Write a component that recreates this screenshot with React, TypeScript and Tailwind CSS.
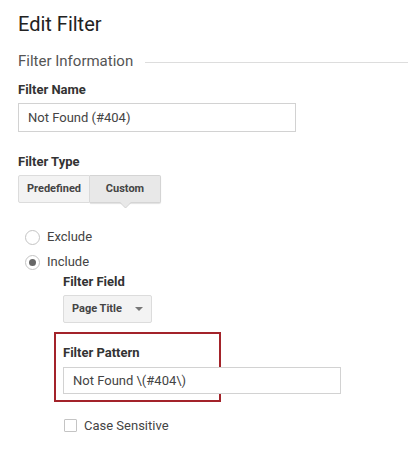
const font = { fontFamily: 'Roboto, "Liberation Sans", sans-serif' };

const Radio = ({ label, checked }: { label: string; checked?: boolean }) => (
    <div className="flex items-center h-[20px]">
        <span className="ml-[25px] w-[15px] h-[15px] rounded-full border border-[#c4c4c4] bg-white flex items-center justify-center">
            {checked && <span className="w-[7px] h-[7px] rounded-full bg-[#666]" />}
        </span>
        <span className="ml-[7px] text-[13px] leading-[20px] text-[#444]">{label}</span>
    </div>
);

export default function App() {
    return (
        <div className="w-[408px] h-[453px] bg-white overflow-hidden pl-[18px] pt-[12px]" style={font}>
            <h1 className="text-[20px] leading-[24px] text-[#222]">Edit Filter</h1>

            <div className="mt-[15px] flex items-center h-[20px]">
                <span className="text-[15px] leading-[20px] text-[#555]">Filter Information</span>
                <span className="ml-[12px] mt-[2px] flex-1 h-px bg-[#ddd]" />
            </div>

            <div className="mt-[11px] text-[13px] leading-[16px] font-bold text-[#333]">Filter Name</div>
            <div className="mt-[5px] w-[278px] h-[29px] border border-[#d2d2d2] flex items-center pl-[9px] text-[13px] text-[#444]">
                Not Found (#404)
            </div>

            <div className="mt-[22px] text-[13px] leading-[16px] font-bold text-[#333]">Filter Type</div>
            <div className="mt-[5px] flex">
                <div className="h-[28px] w-[72px] bg-[#f3f3f3] border border-[#dcdcdc] rounded-l-[2px] flex items-center justify-center text-[11px] font-bold text-[#444]">
                    Predefined
                </div>
                <div className="relative h-[28px] w-[71px] bg-[#e8e8e8] border border-[#d4d4d4] border-l-0 rounded-r-[2px] shadow-[0_1px_1px_rgba(0,0,0,0.12)] flex items-center justify-center text-[11px] font-bold text-[#444]">
                    Custom
                    <svg className="absolute left-[30px] top-[26px]" width="11" height="7" viewBox="0 0 11 7">
                        <path d="M0 0 L5.5 6 L11 0 Z" fill="#e8e8e8" />
                        <path d="M0 0.5 L5.5 6 L11 0.5" fill="none" stroke="#d0d0d0" strokeWidth="1" />
                    </svg>
                </div>
            </div>

            <div className="mt-[24px] -ml-[18px]">
                <Radio label="Exclude" />
                <div className="mt-[5px]">
                    <Radio label="Include" checked />
                </div>
            </div>

            <div className="ml-[45px]">
                <div className="mt-[2px] text-[13px] leading-[16px] font-bold text-[#333]">Filter Field</div>
                <div className="mt-[5px] w-[89px] h-[28px] bg-[#f3f3f3] border border-[#dcdcdc] rounded-[2px] flex items-center pl-[8px] text-[11px] font-bold text-[#444]">
                    Page Title
                    <svg className="ml-[13px]" width="8" height="4" viewBox="0 0 8 4">
                        <path d="M0 0 L8 0 L4 4 Z" fill="#777" />
                    </svg>
                </div>

                <div className="mt-[9px] -ml-[9px] w-[167px] h-[70px] border-2 border-[#a3232a] pl-[7px] pt-[11px]">
                    <div className="text-[13px] leading-[16px] font-bold text-[#333]">Filter Pattern</div>
                    <div className="mt-[6px] w-[278px] h-[27px] border border-[#d2d2d2] bg-white flex items-center pl-[9px] text-[13px] text-[#444]">
                        Not Found \(#404\)
                    </div>
                </div>

                <div className="mt-[17px] flex items-center">
                    <span className="ml-[1px] w-[13px] h-[13px] border border-[#c4c4c4] rounded-[1px] bg-white" />
                    <span className="ml-[7px] text-[13px] leading-[13px] text-[#444]">Case Sensitive</span>
                </div>
            </div>
        </div>
    );
}
